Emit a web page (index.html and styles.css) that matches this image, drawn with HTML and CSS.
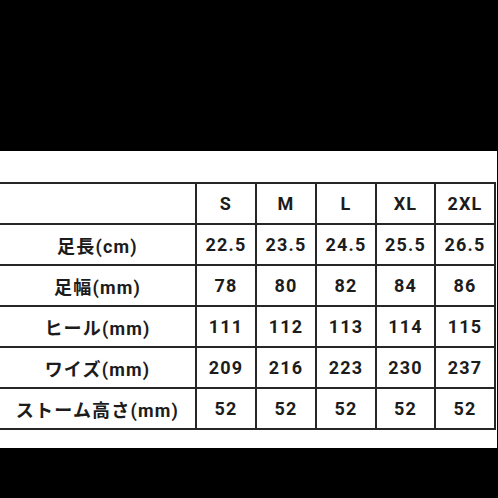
FILE: index.html
```html
<!DOCTYPE html>
<html lang="ja">
<head>
<meta charset="utf-8">
<link rel="stylesheet" href="styles.css">
</head>
<body>
<div class="band top"></div>
<section class="sheet">
  <div class="grid">
    <div class="cell head"></div>
    <div class="cell">S</div>
    <div class="cell">M</div>
    <div class="cell">L</div>
    <div class="cell">XL</div>
    <div class="cell">2XL</div>

    <div class="cell head">足長(cm)</div>
    <div class="cell">22.5</div>
    <div class="cell">23.5</div>
    <div class="cell">24.5</div>
    <div class="cell">25.5</div>
    <div class="cell">26.5</div>

    <div class="cell head">足幅(mm)</div>
    <div class="cell">78</div>
    <div class="cell">80</div>
    <div class="cell">82</div>
    <div class="cell">84</div>
    <div class="cell">86</div>

    <div class="cell head">ヒール(mm)</div>
    <div class="cell">111</div>
    <div class="cell">112</div>
    <div class="cell">113</div>
    <div class="cell">114</div>
    <div class="cell">115</div>

    <div class="cell head">ワイズ(mm)</div>
    <div class="cell">209</div>
    <div class="cell">216</div>
    <div class="cell">223</div>
    <div class="cell">230</div>
    <div class="cell">237</div>

    <div class="cell head">ストーム高さ(mm)</div>
    <div class="cell">52</div>
    <div class="cell">52</div>
    <div class="cell">52</div>
    <div class="cell">52</div>
    <div class="cell">52</div>
  </div>
</section>
<div class="band bottom"></div>
</body>
</html>
```
FILE: styles.css
```css
html, body {
  margin: 0;
  padding: 0;
  background: #000;
  width: 498px;
  height: 498px;
  overflow: hidden;
}
.band.top {
  height: 151px;
  background: #000;
}
.sheet {
  background: #fff;
  height: 297px;
  width: 497px;
  box-sizing: border-box;
  padding-top: 31px;
}
.grid {
  display: grid;
  grid-template-columns: 195px 58px 58px 58px 57px 58px;
  grid-auto-rows: 39px;
  gap: 2px;
  background: #262626;
  padding: 2px 2px 2px 0;
  width: 496px;
  box-sizing: border-box;
}
.cell {
  background: #fff;
  display: flex;
  align-items: center;
  justify-content: center;
  font-family: Roboto, "Noto Sans CJK JP", sans-serif;
  font-weight: 700;
  font-size: 18px;
  letter-spacing: 1.2px;
  color: #1c1c1c;
}
.cell.head {
  font-family: Roboto, "Noto Sans CJK JP", sans-serif;
}
```
